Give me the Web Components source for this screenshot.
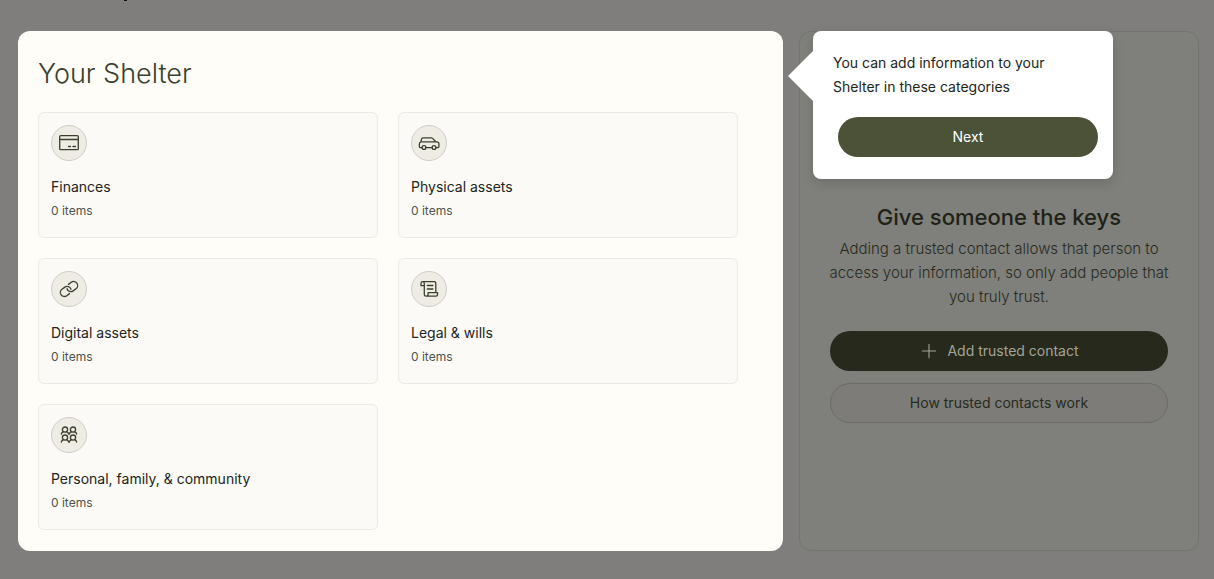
<!DOCTYPE html>
<html lang="en">
<head>
<meta charset="utf-8">
<meta name="viewport" content="width=device-width, initial-scale=1">
<title>Your Shelter</title>
<style>
  body {
    margin: 0;
    min-height: 100vh;
    background: #fefdf8;
    color: #22251b;
    font: 14px/24px Inter, "Open Sans", sans-serif;
    --green: #4b5238;
  }
</style>
</head>
<body>
<shelter-page>
  <category-panel heading="Your Shelter">
    <category-card icon="card" count="0">Finances</category-card>
    <category-card icon="car" count="0">Physical assets</category-card>
    <category-card icon="link" count="0">Digital assets</category-card>
    <category-card icon="scroll" count="0">Legal &amp; wills</category-card>
    <category-card icon="people" count="0">Personal, family, &amp; community</category-card>
  </category-panel>
  <tour-tip slot="tip">
    You can add information to your Shelter in these categories
    <pill-button slot="action">Next</pill-button>
  </tour-tip>
  <trusted-panel slot="side" heading="Give someone the keys">
    Adding a trusted contact allows that person to access your information, so only add people that you truly trust.
    <pill-button slot="action" icon="plus">Add trusted contact</pill-button>
    <pill-button slot="action" kind="outline">How trusted contacts work</pill-button>
  </trusted-panel>
</shelter-page>

<script>
const icons = {
  card: `<rect x="2.7" y="4.7" width="18.6" height="14" rx="1"/><path d="M3 8.5h18M11.5 15.5h2M16 15.5h2.5"/>`,
  car: `<path d="M5 16.6H3.2c-.5 0-.8-.3-.8-.8v-2.9c0-1 .5-1.7 1.4-2l.8-3c.2-.7.7-1.1 1.4-1.1h8.2c.6 0 1 .2 1.4.6l3.2 3.3 2 .5c.8.2 1.1.6 1.1 1.3v3.3c0 .5-.3.8-.8.8H19M8.9 16.6h6.2M3.8 10.8h15"/><circle cx="7" cy="16.5" r="1.9"/><circle cx="17" cy="16.5" r="1.9"/>`,
  link: `<g transform="rotate(-37 12 12)"><path d="M9.6 16H6.2a4 4 0 0 1 0-8h3.6a4 4 0 0 1 3.6 5.4"/><path d="M14.4 8h3.4a4 4 0 0 1 0 8h-3.6a4 4 0 0 1-3.6-5.4"/></g>`,
  scroll: `<path d="M4 8.7h3.3V6.4c0-1.1-.7-1.7-1.7-1.7S4 5.4 4 6.4zM5.6 4.7h11.7c.9 0 1.5.6 1.5 1.5v9.3M7.3 8.7v8.7c0 1.1.7 1.8 1.8 1.8h9.8c.9 0 1.7-.8 1.7-1.9v-1.6h-9.5v1.7c0 1.1-.8 1.8-1.9 1.8M10.3 8.5h5.6M10.3 12h5.6"/>`,
  people: [[8, 6.6], [16, 6.6], [8, 14.6], [16, 14.6]].map(([x, y]) =>
    `<circle cx="${x}" cy="${y}" r="2.6"/><path d="M${x - 3.7} ${y + 4.4}c.3-1.2 1.1-1.9 2.3-2.3M${x + 3.7} ${y + 4.4}c-.3-1.2-1.1-1.9-2.3-2.3"/>`
  ).join(''),
  plus: `<path d="M12 4v16M4 12h16"/>`
};

function icon(name, size) {
  return `<svg width="${size}" height="${size}" viewBox="0 0 24 24" fill="none" stroke="currentColor" stroke-width="1.3" stroke-linecap="round" stroke-linejoin="round" aria-hidden="true">${icons[name]}</svg>`;
}

class ShelterElement extends HTMLElement {
  connectedCallback() {
    if (this.shadowRoot) return;
    this.attachShadow({ mode: 'open' }).innerHTML = this.template();
  }
}

class ShelterPage extends ShelterElement {
  template() {
    return `
      <style>
      :host {
        display: block;
        position: relative;
        min-height: 100vh;
      }

      header {
        height: 31px;
      }

      header::before {
        content: "";
        display: block;
        width: 3px;
        height: 1px;
        margin-left: 124px;
        background: #22251b;
      }

      .columns {
        display: grid;
        grid-template-columns: minmax(0, 1fr) 400px;
        gap: 16px;
        padding: 0 15px 28px 18px;
      }

      .side {
        display: grid;
        position: relative;
      }

      .shade {
        position: absolute;
        inset: 0;
        background: rgba(0, 0, 0, .5);
      }

      .lit {
        position: relative;
        z-index: 1;
      }

      .tip {
        position: absolute;
        z-index: 1;
        top: 0;
        left: 14px;
      }
      </style>
      <header></header>
      <div class="shade"></div>
      <div class="columns">
        <main class="lit"><slot></slot></main>
        <aside class="side">
          <slot name="side"></slot>
          <div class="tip"><slot name="tip"></slot></div>
        </aside>
      </div>
    `;
  }
}

class CategoryPanel extends ShelterElement {
  template() {
    return `
      <style>
      :host {
        display: block;
        border-radius: 12px;
        background: #fefdf8;
        padding: 25px 45px 21px 20px;
      }

      h1 {
        margin: 0 0 20px;
        color: #3b402e;
        font-size: 27px;
        font-weight: 300;
        line-height: 36px;
      }

      .grid {
        display: grid;
        grid-template-columns: repeat(2, minmax(0, 1fr));
        gap: 20px;
      }
      </style>
      <h1>${this.getAttribute('heading')}</h1>
      <div class="grid"><slot></slot></div>
    `;
  }
}

class CategoryCard extends ShelterElement {
  template() {
    return `
      <style>
      :host {
        display: block;
        border: 1px solid #ebeae4;
        border-radius: 6px;
        background: #fbfaf6;
        padding: 12px 12px 14px;
      }

      .icon {
        display: flex;
        align-items: center;
        justify-content: center;
        box-sizing: border-box;
        width: 36px;
        height: 36px;
        margin-bottom: 14px;
        border: 1px solid #cfcdc6;
        border-radius: 50%;
        background: #efece5;
        color: #3b402e;
      }

      .count {
        color: #50534a;
        font-size: 12px;
      }
      </style>
      <div class="icon">${icon(this.getAttribute('icon'), 24)}</div>
      <div class="name"><slot></slot></div>
      <div class="count">${this.getAttribute('count')} items</div>
    `;
  }
}

class TourTip extends ShelterElement {
  template() {
    return `
      <style>
      :host {
        display: block;
        position: relative;
        box-sizing: border-box;
        width: 300px;
        padding: 20px 15px 22px 20px;
        border-radius: 8px;
        background: #fff;
        box-shadow: 0 4px 12px rgba(0, 0, 0, .15);
      }

      :host::before {
        content: "";
        position: absolute;
        top: 20px;
        right: 100%;
        border: 25px solid transparent;
        border-left-width: 0;
        border-right-color: #fff;
      }

      .text {
        padding-right: 40px;
      }

      .action {
        margin: 18px 0 0 5px;
      }
      </style>
      <div class="text"><slot></slot></div>
      <div class="action"><slot name="action"></slot></div>
    `;
  }
}

class TrustedPanel extends ShelterElement {
  template() {
    return `
      <style>
      /* the panel is under the page's shade */
      :host {
        display: block;
        border: 1px solid #73736f;
        border-radius: 12px;
        padding: 169px 22px 30px;
        background: #7f7f7c;
        color: #282b20;
        text-align: center;
        --green: #26291c;
        --on-green: #a3a498;
        --outline: #6a6a66;
        --outline-fill: #7d7c79;
      }

      h2 {
        margin: 0 0 4px;
        color: #1f2216;
        font-size: 22px;
        font-weight: 500;
        line-height: 32px;
      }

      p {
        margin: 0 0 22px;
        font-size: 15px;
        font-weight: 300;
      }

      .actions {
        display: grid;
        gap: 12px;
        padding: 0 8px;
      }
      </style>
      <h2>${this.getAttribute('heading')}</h2>
      <p><slot></slot></p>
      <div class="actions"><slot name="action"></slot></div>
    `;
  }
}

class PillButton extends ShelterElement {
  template() {
    const name = this.getAttribute('icon');
    return `
      <style>
      :host {
        display: block;
      }

      button {
        display: flex;
        align-items: center;
        justify-content: center;
        gap: 8px;
        width: 100%;
        height: 40px;
        border: 1px solid transparent;
        border-radius: 20px;
        background: var(--green) border-box;
        color: var(--on-green, #fff);
        font: inherit;
        cursor: pointer;
      }

      :host([kind="outline"]) button {
        border-color: var(--outline);
        background: var(--outline-fill);
        color: inherit;
      }
      </style>
      <button type="button">${name ? icon(name, 20) : ''}<slot></slot></button>
    `;
  }
}

customElements.define('shelter-page', ShelterPage);
customElements.define('category-panel', CategoryPanel);
customElements.define('category-card', CategoryCard);
customElements.define('tour-tip', TourTip);
customElements.define('trusted-panel', TrustedPanel);
customElements.define('pill-button', PillButton);
</script>
</body>
</html>
